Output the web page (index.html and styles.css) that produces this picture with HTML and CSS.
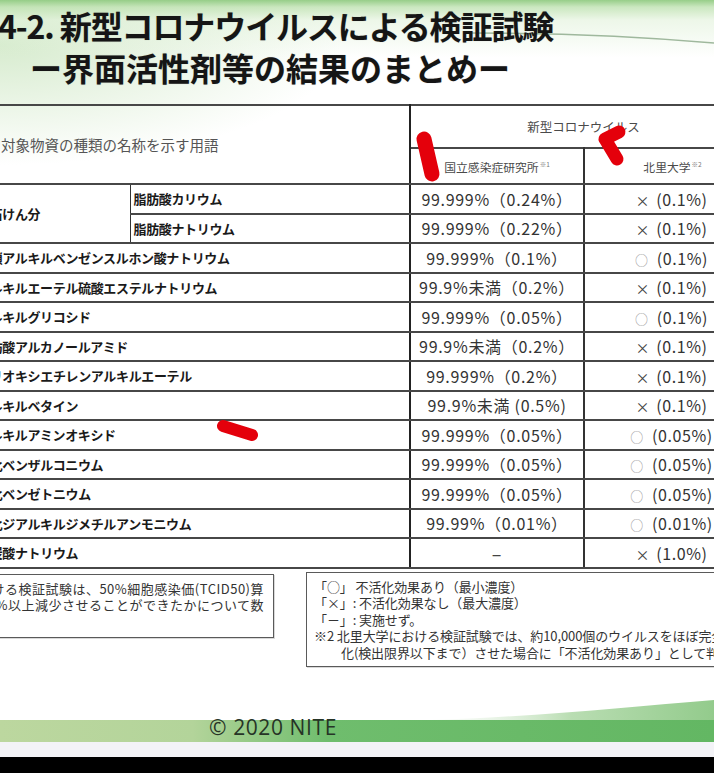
FILE: index.html
```html
<!DOCTYPE html>
<html lang="ja">
<head>
<meta charset="utf-8">
<title>4-2. 新型コロナウイルスによる検証試験</title>
<link rel="stylesheet" href="styles.css">
</head>
<body>
<div class="slide">
  <svg class="deco-top" width="714" height="60" viewBox="0 0 714 60" aria-hidden="true">
    <path d="M470 33 Q600 33 714 43" fill="none" stroke="#9fb89d" stroke-width="1.6"/>
  </svg>
  <header class="title">
    <div class="t1">4-2. 新型コロナウイルスによる検証試験</div>
    <div class="t2">ー界面活性剤等の結果のまとめー</div>
  </header>

  <table class="results">
    <colgroup><col class="c1"><col class="c2"><col class="c3"><col class="c4"></colgroup>
    <thead>
      <tr class="hr1">
        <th class="hname" rowspan="2" colspan="2">対象物資の種類の名称を示す用語</th>
        <th class="hvirus" colspan="2">新型コロナウイルス</th>
      </tr>
      <tr class="hr2">
        <th class="hsub niid">国立感染症研究所<sup>※1</sup></th>
        <th class="hsub kit">北里大学<sup>※2</sup></th>
      </tr>
    </thead>
    <tbody>
      <tr><td class="lbl grp" rowspan="2">純石けん分</td><td class="lbl sub">脂肪酸カリウム</td><td class="v">99.999%（0.24%）</td><td class="k"><span class="x">×</span> (0.1%)</td></tr>
      <tr><td class="lbl sub">脂肪酸ナトリウム</td><td class="v">99.999%（0.22%）</td><td class="k"><span class="x">×</span> (0.1%)</td></tr>
      <tr><td class="lbl" colspan="2">直鎖アルキルベンゼンスルホン酸ナトリウム</td><td class="v">99.999%（0.1%）</td><td class="k"><span class="o">○</span> (0.1%)</td></tr>
      <tr><td class="lbl" colspan="2">アルキルエーテル硫酸エステルナトリウム</td><td class="v">99.9%未満（0.2%）</td><td class="k"><span class="x">×</span> (0.1%)</td></tr>
      <tr><td class="lbl" colspan="2">アルキルグリコシド</td><td class="v">99.999%（0.05%）</td><td class="k"><span class="o">○</span> (0.1%)</td></tr>
      <tr><td class="lbl" colspan="2">脂肪酸アルカノールアミド</td><td class="v">99.9%未満（0.2%）</td><td class="k"><span class="x">×</span> (0.1%)</td></tr>
      <tr><td class="lbl" colspan="2">ポリオキシエチレンアルキルエーテル</td><td class="v">99.999%（0.2%）</td><td class="k"><span class="x">×</span> (0.1%)</td></tr>
      <tr><td class="lbl" colspan="2">アルキルベタイン</td><td class="v">99.9%未満 (0.5%)</td><td class="k"><span class="x">×</span> (0.1%)</td></tr>
      <tr><td class="lbl" colspan="2">アルキルアミンオキシド</td><td class="v">99.999%（0.05%）</td><td class="k"><span class="o">○</span> (0.05%)</td></tr>
      <tr><td class="lbl" colspan="2">塩化ベンザルコニウム</td><td class="v">99.999%（0.05%）</td><td class="k"><span class="o">○</span> (0.05%)</td></tr>
      <tr><td class="lbl" colspan="2">塩化ベンゼトニウム</td><td class="v">99.999%（0.05%）</td><td class="k"><span class="o">○</span> (0.05%)</td></tr>
      <tr><td class="lbl" colspan="2">塩化ジアルキルジメチルアンモニウム</td><td class="v">99.99%（0.01%）</td><td class="k"><span class="o">○</span> (0.01%)</td></tr>
      <tr><td class="lbl" colspan="2">過炭酸ナトリウム</td><td class="v dash">–</td><td class="k"><span class="x">×</span> (1.0%)</td></tr>
    </tbody>
  </table>

  <div class="notes">
    <div class="note note-left">
      <div class="nl"><span>※1 国立感染症研究所における検証試験は、50%細胞感染価(TCID50)算</span></div>
      <div class="nl"><span>出値を何%以上減少させることができたかについて数</span></div>
    </div>
    <div class="note note-right">
      <div class="nr">「○」 不活化効果あり（最小濃度）</div>
      <div class="nr">「×」: 不活化効果なし（最大濃度）</div>
      <div class="nr">「－」: 実施せず。</div>
      <div class="nr">※2 北里大学における検証試験では、約10,000個のウイルスをほぼ完全に不活</div>
      <div class="nr indent">化(検出限界以下まで）させた場合に「不活化効果あり」として判定した。</div>
    </div>
  </div>

  <footer class="footer">
    <svg class="band" width="714" height="48" viewBox="0 0 714 48" aria-hidden="true">
      <defs>
        <linearGradient id="bandG" x1="0" y1="0" x2="1" y2="0">
          <stop offset="0" stop-color="#bcd79f"/>
          <stop offset="0.27" stop-color="#b3d49a"/>
          <stop offset="0.46" stop-color="#6fbd6d"/>
          <stop offset="1" stop-color="#63b763"/>
        </linearGradient>
        <linearGradient id="riseG" x1="0" y1="0" x2="1" y2="0">
          <stop offset="0.55" stop-color="#ffffff" stop-opacity="0"/>
          <stop offset="0.8" stop-color="#b9ddb2"/>
          <stop offset="1" stop-color="#93cb8c"/>
        </linearGradient>
      </defs>
      <path d="M0 26 L430 26 C530 23 630 13 714 6 L714 48 L0 48 Z" fill="url(#riseG)"/>
      <rect x="0" y="26" width="714" height="22" fill="url(#bandG)"/>
    </svg>
    <span class="copy">© 2020 NITE</span>
  </footer>
  <div class="strip"></div>
</div>
<div class="blackbar"></div>

<svg class="marks" width="714" height="773" viewBox="0 0 714 773" aria-hidden="true">
  <g fill="none" stroke="#e4000b" stroke-linecap="round" stroke-linejoin="round">
    <path d="M424 139 L432 174" stroke-width="15"/>
    <path d="M619 132 L605 139 L617 159" stroke-width="13"/>
    <path d="M223 426 L252 435" stroke-width="12"/>
  </g>
</svg>
</body>
</html>
```

FILE: styles.css
```css
html, body {
  margin: 0;
  padding: 0;
}
body {
  width: 714px;
  height: 773px;
  overflow: hidden;
  position: relative;
  background: #000;
  font-family: "Noto Sans CJK JP", "Noto Sans", sans-serif;
  color: #222;
}
.slide {
  position: relative;
  height: 757px;
  overflow: hidden;
  background:
    linear-gradient(180deg, rgba(145,203,130,0.95) 0px, rgba(185,223,170,0.75) 7px, rgba(222,240,214,0.55) 20px, rgba(255,255,255,0) 58px),
    radial-gradient(ellipse 340px 120px at 0 45px, rgba(208,232,198,0.85), rgba(255,255,255,0)),
    #ffffff;
}
.deco-top {
  position: absolute;
  left: 0;
  top: 0;
}
.title {
  position: relative;
  font-weight: 700;
  font-size: 32px;
  line-height: 42px;
  color: #151515;
  padding-top: 4px;
  margin-bottom: 16px;
  text-shadow: 0 0 1px rgba(0,0,0,0.25);
  white-space: nowrap;
}
.t1 {
  margin-left: -2px;
  letter-spacing: -1.1px;
}
.t2 {
  margin-left: 30px;
}

/* table */
.results {
  table-layout: fixed;
  border-collapse: collapse;
  width: 782px;
  margin-left: -26px;
}
.c1 { width: 156px; }
.c2 { width: 280px; }
.c3 { width: 174px; }
.c4 { width: 172px; }
.results th,
.results td {
  border-top: 2px solid #474747;
  border-bottom: 2px solid #474747;
  padding: 0;
  white-space: nowrap;
  overflow: hidden;
}
.results th {
  font-weight: 400;
  color: #4a4a4a;
}
.hr1 th { height: 41px; }
.hr2 th { height: 34px; }
.hname {
  text-align: left;
  padding-left: 27px !important;
  font-size: 14.5px;
  color: #555 !important;
  border-right: 2px solid #222;
}
.hvirus {
  font-size: 12.5px;
  text-align: center;
  border-bottom: 1.5px solid #555 !important;
}
.hsub {
  font-size: 11.8px;
  text-align: center;
  color: #4f4f4f;
}
.hsub.niid {
  border-right: 2px solid #333;
}
.hsub.kit {
  padding-left: 4px !important;
}
.hsub sup {
  font-size: 6.5px;
  vertical-align: 5px;
  margin-left: 1px;
  color: #777;
}
.results tbody td {
  height: 27.5px;
}
.lbl {
  font-weight: 700;
  font-size: 13px;
  letter-spacing: -0.35px;
  color: #1a1a1a;
  padding-left: 3px !important;
  text-align: left;
  border-right: 2px solid #222;
}
.lbl.grp {
  border-right: 1.5px solid #333;
  vertical-align: middle;
}
.v {
  font-size: 16px;
  letter-spacing: 0.7px;
  color: #333;
  text-align: center;
  border-right: 2px solid #333;
}
.v.dash {
  color: #444;
  font-size: 18px;
}
.k {
  font-size: 16px;
  letter-spacing: 0.6px;
  color: #333;
  text-align: center;
  padding-left: 2px !important;
}
.k .o {
  color: #9a9a9a;
  font-size: 13px;
  margin-right: 4px;
}
.k .x {
  color: #444;
  font-size: 14px;
  margin-right: 2px;
}

/* notes */
.notes {
  display: flex;
  align-items: flex-start;
  gap: 32px;
  margin-top: 3px;
}
.note {
  flex: none;
  border: 1.5px solid #5a5a5a;
  box-shadow: 1px 1px 0 rgba(0,0,0,0.15);
  font-size: 13px;
  line-height: 16.5px;
  color: #333;
  white-space: nowrap;
}
.note-left {
  width: 323px;
  margin-left: -60px;
  margin-top: 2px;
  height: 56px;
  padding: 6px 9px 0 0;
  overflow: hidden;
  letter-spacing: 0.5px;
}
.nl {
  display: flex;
  justify-content: flex-end;
}
.note-right {
  width: 460px;
  padding: 6px 0 5px 7px;
  letter-spacing: -0.1px;
}
.nr.indent {
  padding-left: 27px;
}

/* footer */
.footer {
  position: relative;
  height: 48px;
  margin-top: 27px;
  display: flex;
  align-items: flex-end;
}
.band {
  position: absolute;
  left: 0;
  top: 0;
}
.copy {
  position: relative;
  font-family: "Open Sans", "Noto Sans", sans-serif;
  font-size: 21px;
  line-height: 22px;
  color: #263426;
  padding-left: 209px;
  padding-bottom: 4px;
  letter-spacing: 0.6px;
}
.strip {
  height: 19px;
  background: #f3f3f7;
}
.blackbar {
  height: 16px;
  background: #000;
}
.marks {
  position: absolute;
  left: 0;
  top: 0;
  pointer-events: none;
}
```
